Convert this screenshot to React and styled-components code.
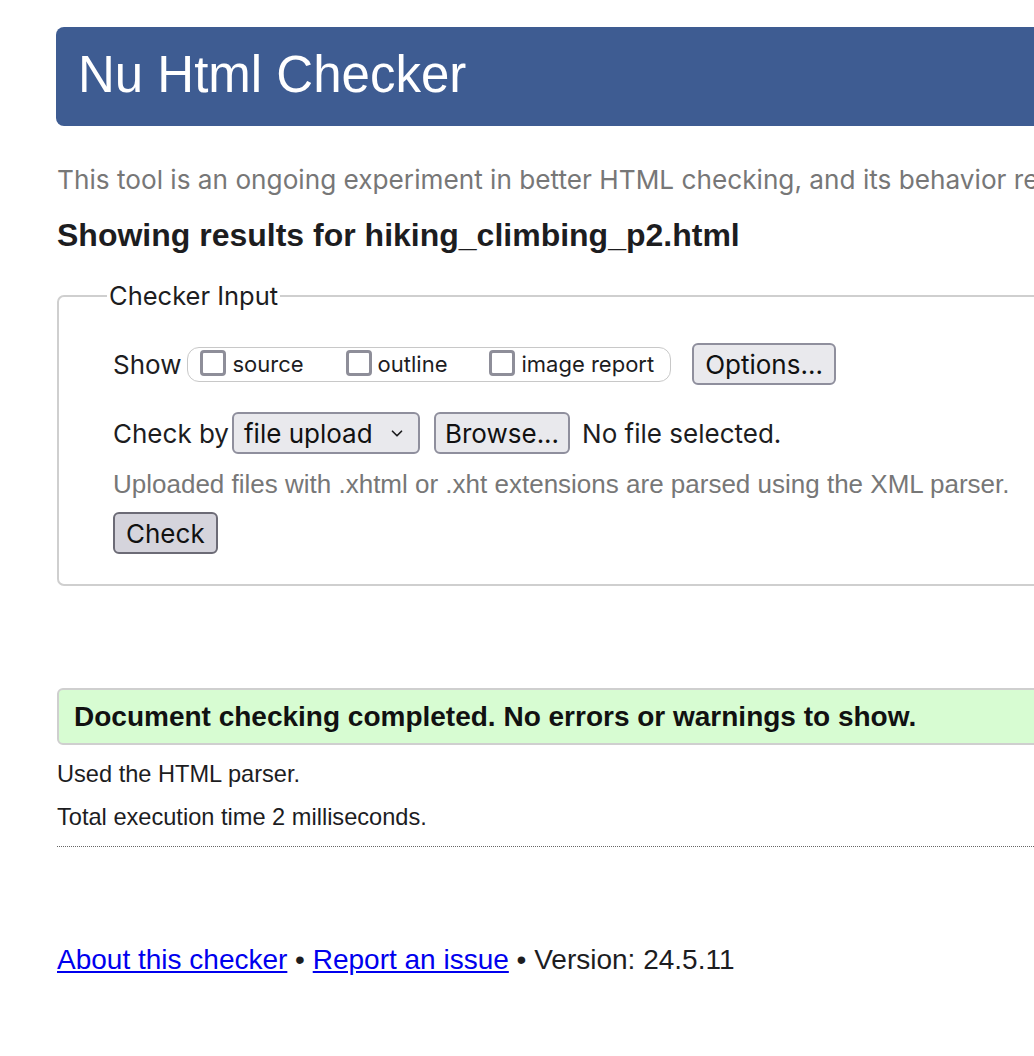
import styled, { createGlobalStyle } from "styled-components"

const GlobalStyle = createGlobalStyle`
  html, body {
    margin: 0;
    padding: 0;
    background: #fff;
    overflow: hidden;
  }
  body {
    font-family: "Liberation Sans", Arial, sans-serif;
    color: #1d1d1f;
  }
`

const sysFont = `"Inter", "Noto Sans", "Liberation Sans", sans-serif`

const App = () => {
  return (
    <Page>
      <GlobalStyle />
      <Header>
        <Title>Nu Html Checker</Title>
      </Header>
      <Intro>
        This tool is an ongoing experiment in better HTML checking, and its behavior remains subject to change
      </Intro>
      <Heading>Showing results for hiking_climbing_p2.html</Heading>

      <Fieldset>
        <Legend>Checker Input</Legend>
        <FormBody>
          <Row>
            <Label>Show</Label>
            <ShowGroup>
              <Option>
                <Box />
                source
              </Option>
              <Option>
                <Box />
                outline
              </Option>
              <Option>
                <Box />
                image report
              </Option>
            </ShowGroup>
            <Button>Options...</Button>
          </Row>
          <Row $top={27}>
            <Label $mr={3}>Check by</Label>
            <Select>
              file upload
              <Chevron viewBox="0 0 12 8">
                <path d="M2 2l4 4 4-4" fill="none" stroke="#1d1d1f" strokeWidth="1.5" strokeLinecap="round" strokeLinejoin="round" />
              </Chevron>
            </Select>
            <Button $ml={14} $px={9}>Browse...</Button>
            <Plain>No file selected.</Plain>
          </Row>
          <Hint>Uploaded files with .xhtml or .xht extensions are parsed using the XML parser.</Hint>
          <Button $primary>Check</Button>
        </FormBody>
      </Fieldset>

      <Success>Document checking completed. No errors or warnings to show.</Success>
      <Detail>Used the HTML parser.</Detail>
      <Detail>Total execution time 2 milliseconds.</Detail>
      <Rule />

      <Footer>
        <Link href="#">About this checker</Link> • <Link href="#">Report an issue</Link> • Version: 24.5.11
      </Footer>
    </Page>
  )
}
export default App

const Page = styled.div`
  width: 1500px;
  padding: 27px 0 60px 56px;
  display: flex;
  flex-direction: column;
  align-items: flex-start;
  box-sizing: border-box;
`
const Header = styled.header`
  align-self: stretch;
  height: 99px;
  background: #3e5c92;
  border-radius: 8px;
  display: flex;
  align-items: center;
  padding-left: 22px;
`
const Title = styled.h1`
  margin: 0;
  font-family: "Liberation Sans", Arial, sans-serif;
  font-weight: 400;
  font-size: 51px;
  color: #fff;
  line-height: 1;
  padding-bottom: 4px;
`
const Intro = styled.p`
  margin: 40px 0 0 1px;
  font-family: ${sysFont};
  font-size: 26.2px;
  color: #777;
  white-space: nowrap;
  line-height: 28px;
`
const Heading = styled.h2`
  margin: 23px 0 0 1px;
  font-size: 32px;
  font-weight: 700;
  line-height: 36px;
  color: #1d1d1f;
`
const Fieldset = styled.fieldset`
  align-self: stretch;
  margin: 28px 0 0 1px;
  padding: 32px 0 30px 48px;
  border: 2px solid #cfcfcf;
  border-radius: 7px;
`
const Legend = styled.legend`
  padding: 0 2px;
  font-family: ${sysFont};
  font-size: 25.5px;
  line-height: 30px;
  color: #1d1d1f;
`
const FormBody = styled.div`
  padding-left: 6px;
  display: flex;
  flex-direction: column;
  align-items: flex-start;
`
const Row = styled.div`
  display: flex;
  align-items: center;
  margin-top: ${p => p.$top || 0}px;
`
const Label = styled.span`
  font-family: ${sysFont};
  font-size: 26px;
  color: #1d1d1f;
  margin-right: ${p => p.$mr ?? 6}px;
`
const ShowGroup = styled.div`
  display: flex;
  align-items: center;
  gap: 42px;
  height: 33px;
  padding: 0 16px 0 12px;
  border: 1px solid #c8c8c8;
  border-radius: 12px;
  margin-right: 21px;
`
const Option = styled.label`
  display: flex;
  align-items: center;
  gap: 6px;
  font-family: ${sysFont};
  font-size: 22px;
  color: #1d1d1f;
`
const Box = styled.span`
  width: 20px;
  height: 20px;
  border: 3.5px solid #8e8e99;
  border-radius: 4px;
  background: #fff;
  margin-top: -2px;
`
const Button = styled.button`
  height: 42px;
  padding: 0 ${p => p.$px ?? 11}px;
  margin-left: ${p => p.$ml || 0}px;
  font-family: ${sysFont};
  font-size: 26px;
  color: #111;
  background: ${p => (p.$primary ? "#d5d4dc" : "#e9e9ed")};
  border: 2px solid ${p => (p.$primary ? "#6c6b76" : "#8f8f9d")};
  border-radius: 6px;
`
const Select = styled.div`
  height: 42px;
  box-sizing: border-box;
  width: 188px;
  display: flex;
  align-items: center;
  justify-content: space-between;
  padding: 0 14px 0 10px;
  font-family: ${sysFont};
  font-size: 26px;
  color: #111;
  background: #e9e9ed;
  border: 2px solid #8f8f9d;
  border-radius: 6px;
`
const Chevron = styled.svg`
  width: 14px;
  height: 9px;
`
const Plain = styled.span`
  font-family: ${sysFont};
  font-size: 26px;
  color: #1d1d1f;
  margin-left: 12px;
`
const Hint = styled.p`
  margin: 15px 0 13px;
  font-family: "Liberation Sans", Arial, sans-serif;
  font-size: 26px;
  line-height: 30px;
  color: #777;
  white-space: nowrap;
`
const Success = styled.div`
  align-self: stretch;
  margin: 102px 0 0 1px;
  height: 57px;
  box-sizing: border-box;
  display: flex;
  align-items: center;
  padding-left: 15px;
  background: #d7fcd2;
  border: 2px solid #cfcfcf;
  border-radius: 6px;
  font-size: 28px;
  font-weight: 700;
  color: #111;
`
const Detail = styled.p`
  margin: 16px 0 0 1px;
  font-size: 23.6px;
  line-height: 27px;
  color: #1d1d1f;
`
const Rule = styled.hr`
  align-self: stretch;
  margin: 15px 0 0 1px;
  border: none;
  border-top: 1px dotted #666;
`
const Footer = styled.footer`
  margin: 97px 0 0 1px;
  font-size: 28px;
  line-height: 32px;
  color: #1d1d1f;
`
const Link = styled.a`
  color: #0000ee;
  text-decoration: underline;
`
